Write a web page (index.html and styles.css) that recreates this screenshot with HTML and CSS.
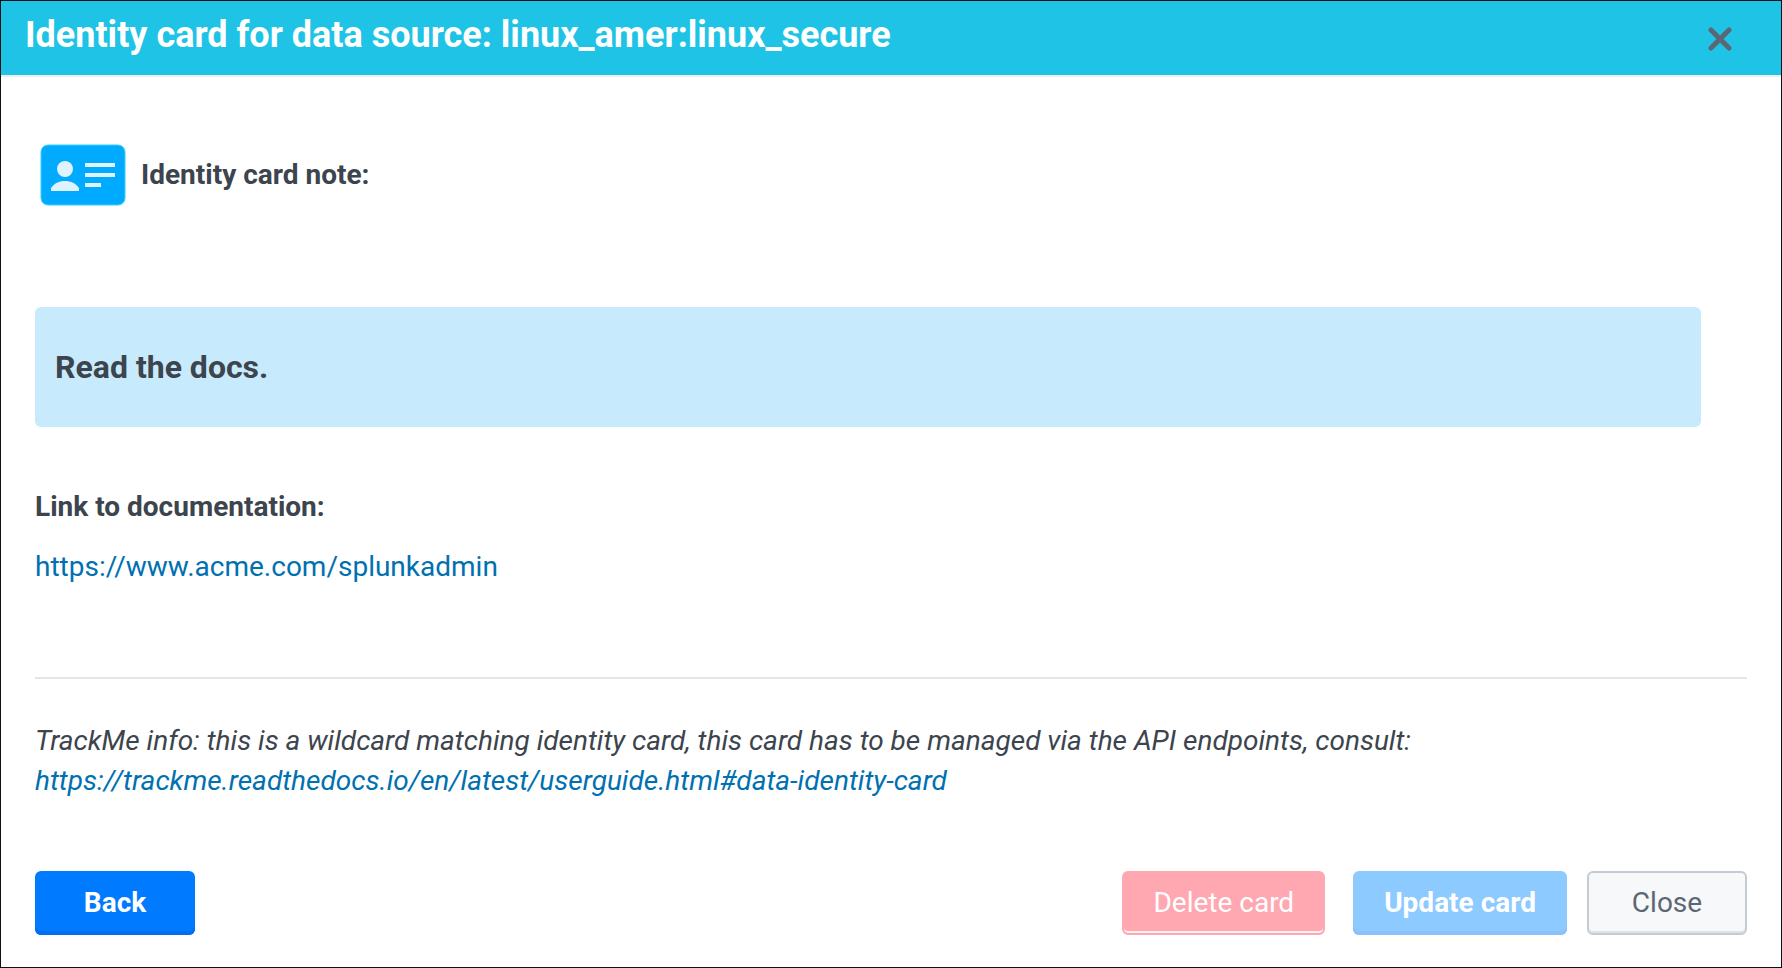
FILE: index.html
```html
<!DOCTYPE html>
<html lang="en">
<head>
<meta charset="utf-8">
<title>Identity card</title>
<link rel="stylesheet" href="styles.css">
</head>
<body>
<section class="modal" role="dialog" aria-labelledby="modal-title">
  <header class="modal-header">
    <h1 class="modal-title" id="modal-title">Identity card for data source: linux_amer:linux_secure</h1>
    <button class="dismiss" type="button" aria-label="Dismiss">
      <svg width="24" height="24" viewBox="0 0 24 24" aria-hidden="true"><path d="M3 3 21 21M21 3 3 21" fill="none" stroke="#5c6773" stroke-width="5" stroke-linecap="round"/></svg>
    </button>
  </header>
  <main class="modal-body">
    <div class="note-heading">
      <svg class="card-icon" width="86" height="62" viewBox="0 0 86 62" aria-hidden="true">
        <rect x="1" y="1" width="84" height="60" rx="7" fill="#00aaff" stroke="#35d0ff" stroke-width="1"/>
        <circle cx="25" cy="25" r="8" fill="#dff2ff"/>
        <path d="M11 47v-3c3-4.500 8-7 14-7s11 2.500 14 7v3z" fill="#dff2ff"/>
        <path d="M45 21h30M45 31h30M45 41h16" fill="none" stroke="#dff2ff" stroke-width="4"/>
      </svg>
      <h2 class="label">Identity card note:</h2>
    </div>
    <p class="note">Read the docs.</p>
    <h2 class="label">Link to documentation:</h2>
    <a class="doc-link" href="https://www.acme.com/splunkadmin">https://www.acme.com/splunkadmin</a>
    <hr class="rule">
    <p class="info">TrackMe info: this is a wildcard matching identity card, this card has to be managed via the API endpoints, consult:<br><a href="https://trackme.readthedocs.io/en/latest/userguide.html#data-identity-card">https://trackme.readthedocs.io/en/latest/userguide.html#data-identity-card</a></p>
  </main>
  <footer class="modal-footer">
    <button class="btn btn-primary btn-back" type="button">Back</button>
    <button class="btn btn-danger" type="button" disabled>Delete card</button>
    <button class="btn btn-primary" type="button" disabled>Update card</button>
    <button class="btn btn-plain" type="button">Close</button>
  </footer>
</section>
</body>
</html>
```
FILE: styles.css
```css
* {
  box-sizing: border-box;
}

body {
  margin: 0;
  background: #fff;
  color: #3c444d;
  font-family: Roboto, "Liberation Sans", sans-serif;
  font-size: 28px;
  line-height: 40px;
}

h1,
h2,
p {
  margin: 0;
}

a {
  color: #0070b0;
  text-decoration: none;
}

.modal {
  display: flex;
  flex-direction: column;
  min-height: 100vh;
  border: 1px solid #111;
}

.modal-header {
  display: flex;
  justify-content: space-between;
  align-items: flex-start;
  padding: 14px 49px 20px 24px;
  background: #1fc3e5;
  border-bottom: 2px solid #ebeeef;
}

.modal-title {
  color: #fff;
  font-size: 36px;
  font-weight: 700;
  line-height: 40px;
}

.dismiss {
  display: flex;
  margin-top: 12px;
  padding: 0;
  border: 0;
  background: none;
}

.modal-body {
  flex: 1;
  padding: 67px 34px 0;
}

.note-heading {
  display: flex;
  align-items: center;
  gap: 15px;
  padding-left: 5px;
}

.label {
  font-size: 28px;
  font-weight: 700;
  line-height: 40px;
}

.note {
  margin: 101px 46px 60px 0;
  padding: 40px 20px;
  border-radius: 6px;
  background: #c7ebfc;
  font-size: 32px;
  font-weight: 700;
}

.doc-link {
  display: block;
  margin-top: 20px;
}

.rule {
  height: 2px;
  margin: 90px 0 42px;
  border: 0;
  background: #e1e6eb;
}

.info {
  font-style: italic;
}

.modal-footer {
  display: flex;
  padding: 32px 34px;
}

.btn {
  min-width: 160px;
  height: 64px;
  padding: 0 31px;
  border: 0;
  border-radius: 6px;
  font: inherit;
}

.btn-back {
  margin-right: auto;
}

.btn-primary {
  background: #007aff;
  box-shadow: inset 0 -4px #006eef;
  color: #fff;
  font-weight: 700;
}

.btn-primary:disabled {
  margin: 0 20px 0 28px;
  background: #8ccaff;
  box-shadow: inset 0 -4px #8cc0fa;
}

.btn-danger {
  padding: 0 29px;
  border: 2px solid #ffa8b2;
  background: #ffa8b2;
  box-shadow: inset 0 -2px #fff0f2;
  color: #fff;
}

.btn-plain {
  border: 2px solid #c3cbd4;
  background: #f7f8fa;
  box-shadow: inset 0 -2px #dfe2e6;
  color: #5c6773;
}
```
